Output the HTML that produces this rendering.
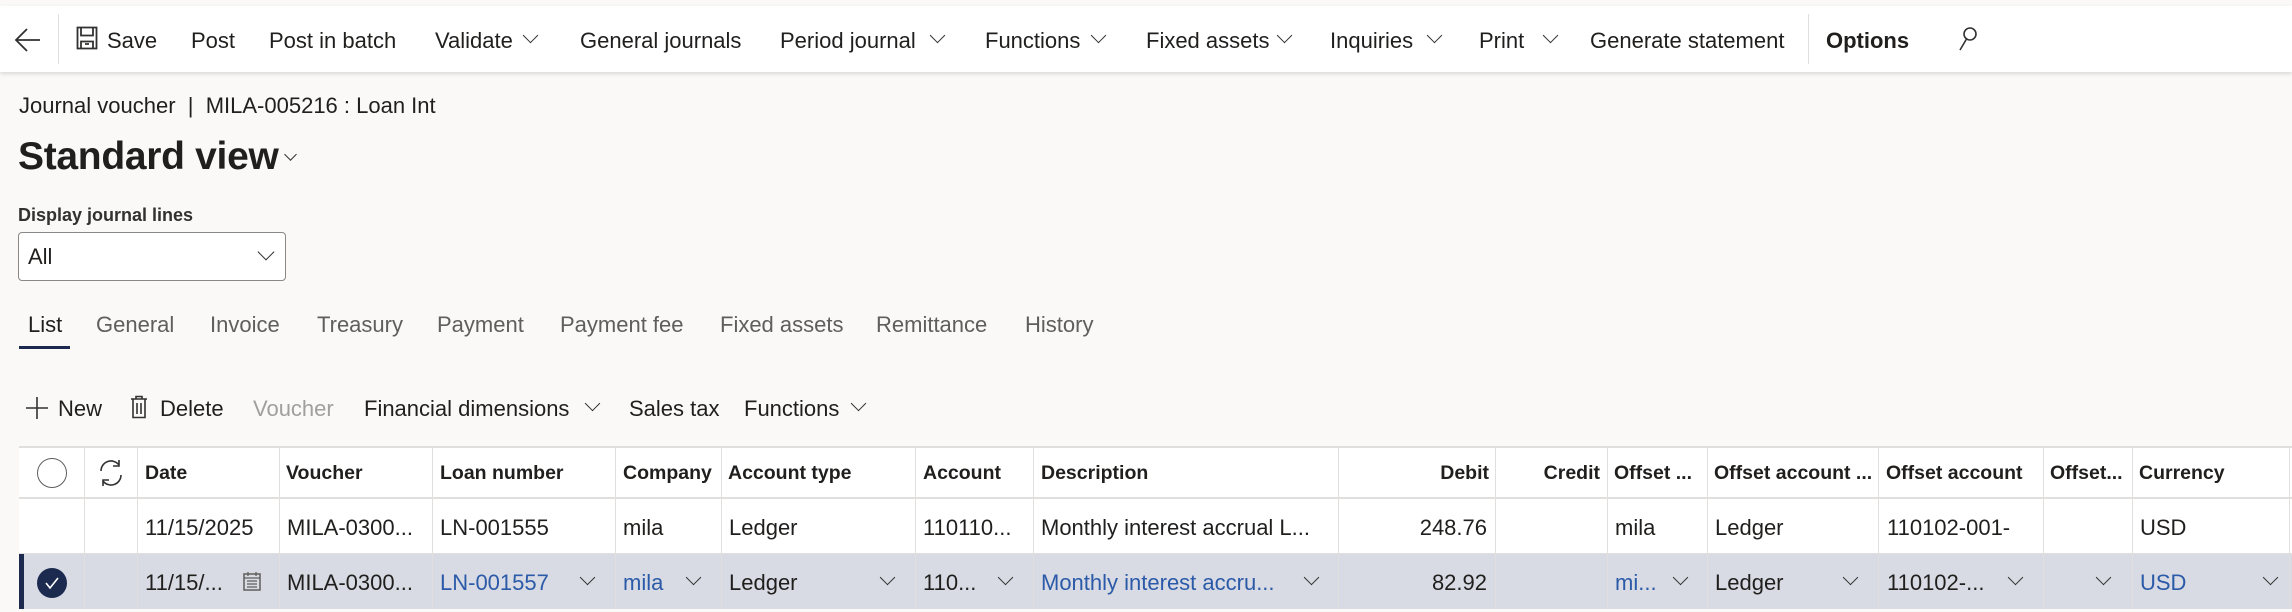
<!DOCTYPE html>
<html><head><meta charset="utf-8"><style>
*{margin:0;padding:0;box-sizing:border-box}
body{width:2292px;height:612px;overflow:hidden;background:#faf9f8;font-family:"Liberation Sans",sans-serif;color:#201f1e;position:relative}
.a{position:absolute;white-space:nowrap}
.tb{position:absolute;left:0;top:6px;width:2292px;height:66px;background:#fff;box-shadow:0 2px 4px rgba(0,0,0,.13)}
.t{font-size:22px;line-height:28px;top:27px}
.chev{display:inline-block;width:11px;height:11px;border-right:1.3px solid #323130;border-bottom:1.3px solid #323130;transform:rotate(45deg);position:absolute}
.cell{font-size:22px;line-height:28px}
.h{font-size:19.5px;font-weight:bold;line-height:26px;top:460px}
.vl{position:absolute;top:446px;width:1px;height:163px;background:#e1dfdd}
.blue{color:#2b5aa8}
</style></head><body>
<div class="tb"></div>
<svg class="a" style="left:14px;top:25px" width="28" height="30" viewBox="0 0 28 30"><path d="M26 15H3M13 4L2 15l11 11" fill="none" stroke="#323130" stroke-width="1.8"/></svg>
<div class="a" style="left:58px;top:14px;width:1px;height:50px;background:#e1dfdd"></div>
<svg class="a" style="left:76px;top:26px" width="22" height="24" viewBox="0 0 22 24"><path d="M1.5 1.5h19v21h-19z M5 1.5v8h12v-8 M5 22.5v-7h12v7 M9 18h4" fill="none" stroke="#323130" stroke-width="1.8"/></svg>
<div class="a t" style="left:107px">Save</div>
<div class="a t" style="left:191px">Post</div>
<div class="a t" style="left:269px">Post in batch</div>
<div class="a t" style="left:435px">Validate</div><span class="chev" style="left:525px;top:30px"></span>
<div class="a t" style="left:580px">General journals</div>
<div class="a t" style="left:780px">Period journal</div><span class="chev" style="left:932px;top:30px"></span>
<div class="a t" style="left:985px">Functions</div><span class="chev" style="left:1093px;top:30px"></span>
<div class="a t" style="left:1146px">Fixed assets</div><span class="chev" style="left:1279px;top:30px"></span>
<div class="a t" style="left:1330px">Inquiries</div><span class="chev" style="left:1429px;top:30px"></span>
<div class="a t" style="left:1479px">Print</div><span class="chev" style="left:1545px;top:30px"></span>
<div class="a t" style="left:1590px">Generate statement</div>
<div class="a" style="left:1808px;top:14px;width:1px;height:50px;background:#e1dfdd"></div>
<div class="a t" style="left:1826px;font-weight:bold">Options</div>
<svg class="a" style="left:1958px;top:26px" width="20" height="26" viewBox="0 0 20 26"><circle cx="12" cy="8" r="6" fill="none" stroke="#323130" stroke-width="1.6"/><path d="M8.5 13L2 24" stroke="#323130" stroke-width="1.6"/></svg>

<div class="a" style="left:19px;top:92px;font-size:22px;line-height:28px">Journal voucher &nbsp;|&nbsp; MILA-005216 : Loan Int</div>
<div class="a" style="left:18px;top:134px;font-size:39px;font-weight:bold;line-height:46px;letter-spacing:-0.3px">Standard view</div>
<span class="chev" style="left:286px;top:150px;width:9px;height:9px"></span>
<div class="a" style="left:18px;top:203px;font-size:18px;font-weight:bold;color:#323130;line-height:24px">Display journal lines</div>
<div class="a" style="left:18px;top:232px;width:268px;height:49px;border:1px solid #8a8886;border-radius:4px;background:#fff"></div>
<div class="a" style="left:28px;top:243px;font-size:22px;line-height:28px">All</div>
<span class="chev" style="left:260px;top:246px;width:12px;height:12px"></span>

<div class="a cell" style="left:28px;top:311px">List</div>
<div class="a cell" style="left:96px;top:311px;color:#605e5c">General</div>
<div class="a cell" style="left:210px;top:311px;color:#605e5c">Invoice</div>
<div class="a cell" style="left:317px;top:311px;color:#605e5c">Treasury</div>
<div class="a cell" style="left:437px;top:311px;color:#605e5c">Payment</div>
<div class="a cell" style="left:560px;top:311px;color:#605e5c">Payment fee</div>
<div class="a cell" style="left:720px;top:311px;color:#605e5c">Fixed assets</div>
<div class="a cell" style="left:876px;top:311px;color:#605e5c">Remittance</div>
<div class="a cell" style="left:1025px;top:311px;color:#605e5c">History</div>
<div class="a" style="left:19px;top:346px;width:51px;height:3px;background:#1b2a4e"></div>

<svg class="a" style="left:25px;top:396px" width="24" height="24" viewBox="0 0 24 24"><path d="M12 1v22M1 12h22" stroke="#323130" stroke-width="1.6"/></svg>
<div class="a cell" style="left:58px;top:395px">New</div>
<svg class="a" style="left:130px;top:395px" width="18" height="24" viewBox="0 0 18 24"><path d="M1 4h16M6 4V1.5h6V4M3 4v18.5h12V4M7 8v11M11 8v11" fill="none" stroke="#323130" stroke-width="1.6"/></svg>
<div class="a cell" style="left:160px;top:395px">Delete</div>
<div class="a cell" style="left:253px;top:395px;color:#a19f9d">Voucher</div>
<div class="a cell" style="left:364px;top:395px">Financial dimensions</div><span class="chev" style="left:587px;top:398px"></span>
<div class="a cell" style="left:629px;top:395px">Sales tax</div>
<div class="a cell" style="left:744px;top:395px">Functions</div><span class="chev" style="left:853px;top:398px"></span>

<div class="a" style="left:19px;top:446px;width:2273px;height:53px;background:#fff;border-top:2px solid #e1dfdd;border-bottom:2px solid #e1dfdd"></div>
<div class="a" style="left:19px;top:499px;width:2273px;height:55px;background:#fff;border-bottom:1px solid #e1dfdd"></div>
<div class="a" style="left:19px;top:554px;width:2273px;height:55px;background:#d8dbe3"></div>
<div class="a" style="left:19px;top:554px;width:5px;height:55px;background:#1b2a4e"></div>
<div class="vl" style="left:84px"></div><div class="vl" style="left:137px"></div><div class="vl" style="left:279px"></div><div class="vl" style="left:432px"></div><div class="vl" style="left:615px"></div><div class="vl" style="left:721px"></div><div class="vl" style="left:915px"></div><div class="vl" style="left:1033px"></div><div class="vl" style="left:1338px"></div><div class="vl" style="left:1495px"></div><div class="vl" style="left:1607px"></div><div class="vl" style="left:1707px"></div><div class="vl" style="left:1878px"></div><div class="vl" style="left:2043px"></div><div class="vl" style="left:2132px"></div><div class="vl" style="left:2289px"></div>

<div class="a" style="left:37px;top:458px;width:30px;height:30px;border:1.5px solid #605e5c;border-radius:50%;background:#fff"></div>
<svg class="a" style="left:97px;top:458px" width="28" height="30" viewBox="0 0 28 30"><path d="M4 13a10 10 0 0 1 18-6M24 17a10 10 0 0 1-18 6M22 2v6h-6M6 28v-6h6" fill="none" stroke="#323130" stroke-width="1.6"/></svg>
<div class="a h" style="left:145px">Date</div>
<div class="a h" style="left:286px">Voucher</div>
<div class="a h" style="left:440px">Loan number</div>
<div class="a h" style="left:623px">Company</div>
<div class="a h" style="left:728px">Account type</div>
<div class="a h" style="left:923px">Account</div>
<div class="a h" style="left:1041px">Description</div>
<div class="a h" style="left:1389px;width:100px;text-align:right">Debit</div>
<div class="a h" style="left:1500px;width:100px;text-align:right">Credit</div>
<div class="a h" style="left:1614px">Offset ...</div>
<div class="a h" style="left:1714px">Offset account ...</div>
<div class="a h" style="left:1886px">Offset account</div>
<div class="a h" style="left:2050px">Offset...</div>
<div class="a h" style="left:2139px">Currency</div>

<div class="a cell" style="left:145px;top:514px">11/15/2025</div>
<div class="a cell" style="left:287px;top:514px">MILA-0300...</div>
<div class="a cell" style="left:440px;top:514px">LN-001555</div>
<div class="a cell" style="left:623px;top:514px">mila</div>
<div class="a cell" style="left:729px;top:514px">Ledger</div>
<div class="a cell" style="left:923px;top:514px">110110...</div>
<div class="a cell" style="left:1041px;top:514px">Monthly interest accrual L...</div>
<div class="a cell" style="left:1387px;top:514px;width:100px;text-align:right">248.76</div>
<div class="a cell" style="left:1615px;top:514px">mila</div>
<div class="a cell" style="left:1715px;top:514px">Ledger</div>
<div class="a cell" style="left:1887px;top:514px">110102-001-</div>
<div class="a cell" style="left:2140px;top:514px">USD</div>

<div class="a" style="left:37px;top:568px;width:30px;height:30px;border-radius:50%;background:#1b2a4e"></div>
<svg class="a" style="left:42px;top:573px" width="20" height="20" viewBox="0 0 20 20"><path d="M4 10l4 5 8-10" fill="none" stroke="#fff" stroke-width="1.6"/></svg>
<div class="a cell" style="left:145px;top:569px">11/15/...</div>
<svg class="a" style="left:243px;top:571px" width="18" height="20" viewBox="0 0 18 20"><rect x="1" y="3" width="16" height="16" fill="none" stroke="#605e5c" stroke-width="1.5"/><path d="M1 7h16M5 1v4M13 1v4M4 10h10M4 13h10M4 16h10" stroke="#605e5c" stroke-width="1.3"/></svg>
<div class="a cell" style="left:287px;top:569px">MILA-0300...</div>
<div class="a cell blue" style="left:440px;top:569px">LN-001557</div><span class="chev" style="left:582px;top:572px"></span>
<div class="a cell blue" style="left:623px;top:569px">mila</div><span class="chev" style="left:688px;top:572px"></span>
<div class="a cell" style="left:729px;top:569px">Ledger</div><span class="chev" style="left:882px;top:572px"></span>
<div class="a cell" style="left:923px;top:569px">110...</div><span class="chev" style="left:1000px;top:572px"></span>
<div class="a cell blue" style="left:1041px;top:569px">Monthly interest accru...</div><span class="chev" style="left:1306px;top:572px"></span>
<div class="a cell" style="left:1387px;top:569px;width:100px;text-align:right">82.92</div>
<div class="a cell blue" style="left:1615px;top:569px">mi...</div><span class="chev" style="left:1675px;top:572px"></span>
<div class="a cell" style="left:1715px;top:569px">Ledger</div><span class="chev" style="left:1845px;top:572px"></span>
<div class="a cell" style="left:1887px;top:569px">110102-...</div><span class="chev" style="left:2010px;top:572px"></span>
<span class="chev" style="left:2098px;top:572px"></span>
<div class="a cell blue" style="left:2140px;top:569px">USD</div><span class="chev" style="left:2265px;top:572px"></span>
</body></html>
